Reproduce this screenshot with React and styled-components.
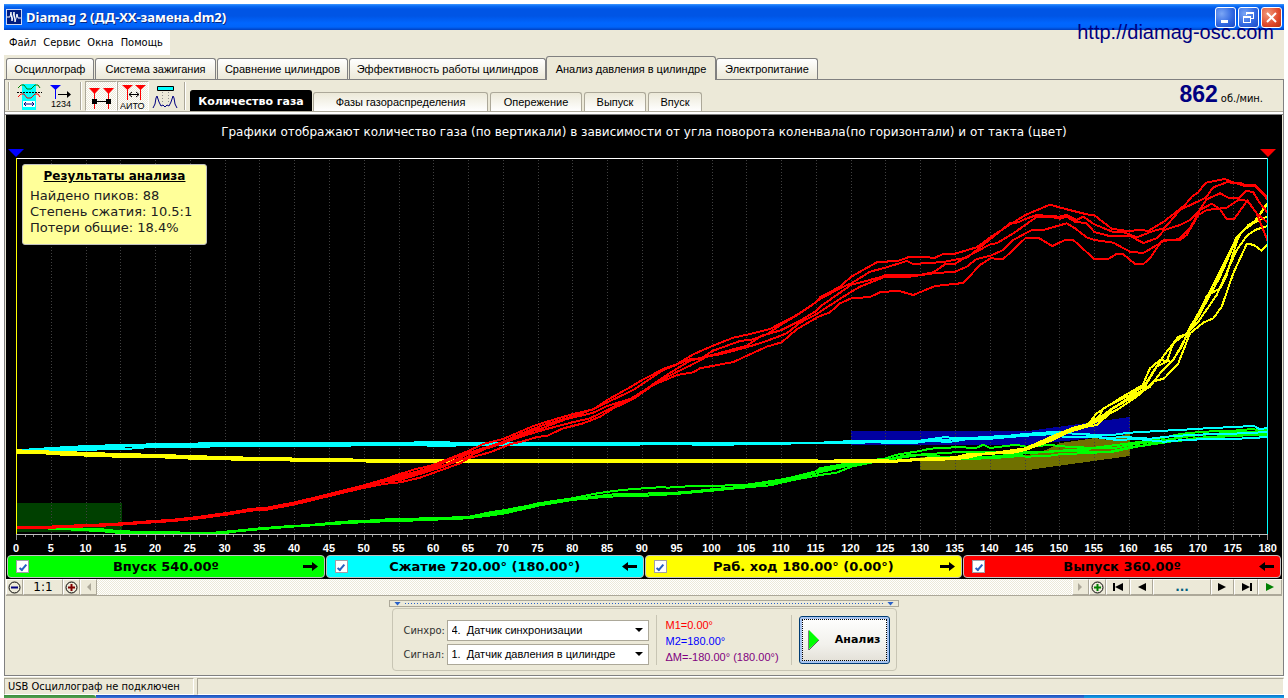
import React from "react";
import styled, { createGlobalStyle, css } from "styled-components";

const face = "#ece9d8";
const ui = '"Liberation Sans", Arial, sans-serif';
const tahoma = '"DejaVu Sans Condensed", "DejaVu Sans", sans-serif';
const verdana = '"DejaVu Sans", Verdana, sans-serif';

const GlobalStyle = createGlobalStyle`
  *, *::before, *::after { box-sizing: border-box; }
  body { margin: 0; background: #fff; font-family: ${ui}; font-size: 12px; color: #000; }
  button, select, input { font: inherit; color: inherit; margin: 0; padding: 0; }
`;

const Page = styled.div`
  position: relative;
  padding: 4px 4px 0;
`;

const Window = styled.main`
  background: ${face};
`;

/* ---------- title bar ---------- */

const TitleBar = styled.header`
  display: flex;
  align-items: center;
  gap: 4px;
  height: 26px;
  padding: 0 2px;
  background: linear-gradient(#3f97ff 0, #0a6cf5 2px, #0055e5 5px, #0055e5 12px, #0066ff 19px, #0064fa 23px, #0040c0 26px);
`;

const AppTitle = styled.h1`
  flex: 1;
  margin: 0;
  font: bold 13px/20px "Noto Sans", ${verdana};
  color: #fff;
  text-shadow: 1px 1px 0 #0a2a80;
`;

const WindowButtons = styled.div`
  display: flex;
  gap: 2px;
`;

const WindowButton = styled.button`
  display: grid;
  place-items: center;
  width: 21px;
  height: 21px;
  border: 1px solid #fff;
  border-radius: 3px;
  background: ${(p) =>
    p.$close
      ? "radial-gradient(circle at 30% 30%, #f09a7c, #e0482a 60%, #b8300c)"
      : "radial-gradient(circle at 30% 30%, #7ba6f5, #2f66e0 60%, #1c49c4)"};
`;

const SiteLink = styled.a`
  position: absolute;
  top: 20px;
  right: 14px;
  font: 20px/24px ${ui};
  color: #000080;
  text-decoration: none;
`;

/* ---------- menu and tabs ---------- */

const MenuBar = styled.nav`
  display: flex;
  gap: 7px;
  width: 166px;
  height: 25px;
  padding: 0 5px;
  background: #fff;
`;

const MenuItem = styled.button`
  border: 0;
  background: none;
  font: 11px/24px ${tahoma};
`;

const TabRow = styled.div`
  display: flex;
  align-items: flex-end;
  gap: 1px;
  height: 25px;
  padding-left: 2px;
  border-bottom: 1px solid #808080;
`;

const Tab = styled.button`
  width: ${(p) => p.$width}px;
  height: 21px;
  border: 1px solid #808080;
  border-bottom: 0;
  border-radius: 3px 3px 0 0;
  background: linear-gradient(#fff, ${face});
  font: 11px/20px ${ui};
  white-space: nowrap;
  ${(p) =>
    p.$active &&
    css`
      height: 24px;
      margin: 0 -1px -1px;
      background: ${face};
    `}
`;

const Client = styled.section`
  border: solid #808080;
  border-width: 0 1px 1px;
`;

const ToolRow = styled.div`
  display: flex;
  align-items: flex-end;
  height: 32px;
  border-bottom: 1px solid #aca899;
`;

const Separator = styled.span`
  width: 2px;
  height: 28px;
  margin: 0 3px 1px;
  border-left: 1px solid #aca899;
  border-right: 1px solid #fff;
`;

const Tool = styled.button`
  display: grid;
  place-items: center;
  width: 32px;
  height: 30px;
  border: 1px solid transparent;
  background: none;
  ${(p) =>
    p.$pressed &&
    css`
      border-color: #aca899 #fff #fff #aca899;
      background: repeating-conic-gradient(#fff 0 25%, ${face} 0 50%) 0 0 / 2px 2px;
    `}
`;

const SubTabs = styled.div`
  display: flex;
  flex: 1;
  align-items: flex-end;
  gap: 2px;
  padding-left: 1px;
`;

const SubTab = styled.button`
  width: ${(p) => p.$width}px;
  height: 19px;
  border: 1px solid #aca899;
  border-bottom: 0;
  border-radius: 3px 3px 0 0;
  background: linear-gradient(${face}, #fff);
  font: 11px/18px ${ui};
  white-space: nowrap;
  ${(p) =>
    p.$active &&
    css`
      height: 21px;
      margin-right: -1px;
      border-color: #000;
      background: #000;
      color: #fff;
      font: bold 11px/19px ${verdana};
    `}
`;

const Rpm = styled.div`
  display: flex;
  align-items: baseline;
  gap: 3px;
  padding-right: 20px;
  font: 11px/24px ${tahoma};
  strong {
    font: bold 23px/24px ${ui};
    color: #000080;
  }
`;

const ClientEdge = styled.div`
  height: 3px;
  background: #fff;
  border-bottom: 1px solid #808080;
`;

/* ---------- chart ---------- */

const ChartArea = styled.div`
  position: relative;
  margin: 0 1px;
  background: #000;
  color: #fff;
`;

const ChartTitle = styled.h2`
  margin: 0;
  height: 34px;
  font: 12px/34px ${verdana};
  text-align: center;
`;

const Plot = styled.div`
  padding: 0 14px 0 10px;
`;

const Markers = styled.div`
  display: flex;
  justify-content: space-between;
  height: 9px;
  margin: 0 -8px;
`;

const Triangle = styled.span`
  width: 16px;
  height: 8px;
  background: ${(p) => p.color};
  clip-path: polygon(0 0, 100% 0, 50% 100%);
`;

const PlotSvg = styled.svg`
  display: block;
  width: 100%;
  height: 384px;
`;

const AxisLabels = styled.div`
  display: flex;
  justify-content: space-between;
  height: 13px;
  font: bold 11px/12px ${ui};
  span {
    display: flex;
    justify-content: center;
    width: 0;
  }
`;

const Results = styled.aside`
  position: absolute;
  top: 49px;
  left: 16px;
  width: 185px;
  height: 81px;
  padding: 3px 7px;
  border: 1px solid #c0c0c0;
  border-radius: 3px;
  background: #ffff99;
  color: #202020;
  font: 13px/16px ${verdana};
  h3 {
    margin: 0 0 4px;
    font: bold 12px/16px ${verdana};
    color: #000;
    text-align: center;
    text-decoration: underline;
  }
  p {
    margin: 0;
    white-space: nowrap;
  }
`;

const Channels = styled.div`
  display: grid;
  grid-template-columns: repeat(4, 1fr);
  gap: 1px;
  padding: 0 1px 1px;
`;

const Channel = styled.label`
  display: flex;
  align-items: center;
  height: 23px;
  padding: 0 6px 0 8px;
  border: 1px solid #c0c0c0;
  border-radius: 4px;
  background: ${(p) => p.$bg};
  color: #000;
  font: bold 13px/20px ${verdana};
  > span {
    flex: 1;
    text-align: center;
  }
`;

const Check = styled.input`
  display: grid;
  place-items: center;
  appearance: none;
  width: 13px;
  height: 13px;
  border: 1px solid #a0a0a8;
  background: #fff;
  &:checked::after {
    content: "";
    width: 4px;
    height: 8px;
    border: solid #2860c0;
    border-width: 0 2px 2px 0;
    transform: rotate(40deg);
  }
`;

/* ---------- scroll row ---------- */

const ScrollRow = styled.div`
  display: flex;
  height: 17px;
  margin: 0 1px;
  border-bottom: 1px solid #aca899;
`;

const Track = styled.div`
  flex: 1;
  background: repeating-conic-gradient(#fff 0 25%, ${face} 0 50%) 0 0 / 2px 2px;
`;

const Small = styled.button`
  display: grid;
  place-items: center;
  width: ${(p) => p.$width || 17}px;
  height: 16px;
  border: 1px solid;
  border-color: #fff #aca899 #aca899 #fff;
  background: ${face};
  color: ${(p) => p.color || "#000"};
  font: ${(p) => (p.$bold ? "bold" : "normal")} 12px/14px ${verdana};
`;

/* ---------- control panel ---------- */

const ControlPanel = styled.div`
  display: flex;
  flex-direction: column;
  align-items: center;
  padding: 4px 0;
`;

const Splitter = styled.div`
  display: flex;
  align-items: center;
  justify-content: space-between;
  width: 510px;
  height: 7px;
  padding: 0 4px;
  border: 1px solid #aca899;
  &::before, &::after {
    content: "";
    width: 7px;
    height: 4px;
    background: #2860c8;
    clip-path: polygon(0 0, 100% 0, 50% 100%);
  }
  i {
    flex: 1;
    height: 1px;
    margin: 0 4px;
    background: repeating-linear-gradient(90deg, #2860c8 0 1px, transparent 1px 3px);
  }
`;

const Group = styled.form`
  display: flex;
  align-items: center;
  width: 505px;
  height: 63px;
  margin: 1px 0 0;
  padding: 0 6px 0 11px;
  border: 1px solid #c8c5b4;
  border-radius: 4px;
`;

const Fields = styled.div`
  display: grid;
  grid-template-columns: 43px 202px;
  row-gap: 3px;
  align-items: center;
  padding-top: 6px;
  label {
    font: 11px/21px ${tahoma};
    color: #303030;
  }
`;

const SelectBox = styled.div`
  position: relative;
  svg {
    position: absolute;
    top: 8px;
    right: 6px;
    pointer-events: none;
  }
`;

const Select = styled.select`
  display: block;
  appearance: none;
  width: 100%;
  height: 21px;
  padding: 0 4px;
  border: 1px solid #aca899;
  border-radius: 0;
  background: #fff;
  font: 11px/19px ${ui};
  white-space: pre;
`;

const Readings = styled.div`
  width: 137px;
  height: 50px;
  margin: 0 7px;
  padding: 2px 0 0 9px;
  border: solid #c8c5b4;
  border-width: 0 1px;
  font: 11px/16px ${ui};
  p {
    margin: 0;
    white-space: nowrap;
  }
`;

const Reading = styled.p`
  color: ${(p) => p.color};
`;

const AnalyseButton = styled.button`
  display: flex;
  align-items: center;
  gap: 16px;
  width: 91px;
  height: 48px;
  padding: 0 8px;
  border: 1px solid #003c74;
  border-radius: 3px;
  background: linear-gradient(#fff, #f2f1ec 60%, #e2dfd6);
  box-shadow: inset 0 0 0 2px #a8c4f0;
  outline: 1px dotted #000;
  outline-offset: -4px;
  font: bold 11px/20px ${verdana};
  svg {
    flex: none;
  }
`;

/* ---------- status and task bar ---------- */

const StatusBar = styled.footer`
  display: flex;
  gap: 3px;
  padding: 1px 0 0;
  border-top: 1px solid #fff;
`;

const StatusCell = styled.div`
  width: ${(p) => (p.$wide ? "auto" : "190px")};
  flex: ${(p) => (p.$wide ? 1 : "none")};
  height: 17px;
  padding-left: 3px;
  border: 1px solid;
  border-color: #aca899 #fff #fff #aca899;
  font: 11px/15px ${tahoma};
`;

const Taskbar = styled.div`
  display: grid;
  grid-template-columns: 92px 1fr 200px;
  height: 4px;
  i:nth-child(1) { background: linear-gradient(#3c8c3c, #58a858); border-radius: 0 3px 0 0; }
  i:nth-child(2) { background: linear-gradient(#1c4cb8, #4088e8); }
  i:nth-child(3) { background: linear-gradient(#0c70c8, #18b8f8); }
`;

/* ---------- plot data ----------
   A trace is a list of sections. Each section has the corner it is measured
   from and its points, in thirds of a plot unit from that corner. */

const corners = { a: [0, 430], b: [400, 300], c: [820, 400], d: [820, 160] };

const toPoints = (sections) =>
  sections
    .map(([corner, pts]) => {
      const [ox, oy] = corners[corner];
      return pts
        .split(" ")
        .map((pair) => {
          const [x, y] = pair.split(",").map(Number);
          return `${(ox + x / 3).toFixed(1)},${(oy + y / 3).toFixed(1)}`;
        })
        .join(" ");
    })
    .join(" ");

const redTop = "50,292 115,292 180,288 265,285 330,282 380,279 430,275 520,269 600,260 700,246 750,237 800,233 885,217 935,205 1010,186 1080,169 1150,149";
const redLow = "50,295 115,295 180,292 265,289 330,286 380,283 430,279 520,273 600,265 700,251 750,242 800,239 885,223 935,211 1010,193 1080,176 1150,162";
const redMid = "50,294 115,294 180,290 265,287 330,284 380,281 430,277 520,271 600,262 700,248 750,239 800,236 885,220 935,208 1010,189 1080,172 1150,155";

const red = [
  [["a", redTop], ["b", "0,522 45,508 100,495 150,475 205,453 250,432 310,417 360,395 400,378 450,362 517,343 580,328 622,300 690,262 727,240 790,207 832,192 880,163 937,138 1000,113 1060,100 1110,87 1145,68 1190,45 1250,5"], ["d", "0,412 60,380 94,350 170,307 235,302 270,290 345,293 370,282 405,281 470,262 511,232 560,200 616,165 690,134 745,149 800,163 823,166 875,206 920,213 965,210 985,213 1033,184 1095,135 1115,110 1135,97 1157,68 1215,57 1240,67 1270,77 1305,74 1345,115"]],
  [["a", redTop], ["b", "0,528 60,512 110,497 170,470 250,445 310,425 360,402 430,375 517,350 585,325 622,307 700,270 727,252 790,210 832,193 870,177 905,175 937,153 1020,123 1060,118 1100,103 1145,73 1200,40 1250,5"], ["d", "0,417 60,385 94,370 150,335 196,323 260,303 280,312 370,306 405,299 440,293 470,270 511,237 570,190 595,187 616,177 650,165 718,170 740,165 770,180 790,170 823,193 880,216 910,216 950,232 1000,213 1033,205 1080,150 1157,113 1180,82 1220,67 1265,70 1280,78 1305,78 1345,120"]],
  [["a", redMid], ["b", "0,533 60,518 130,497 205,462 310,430 360,405 430,383 500,357 580,338 622,318 690,297 727,275 790,232 832,205 870,182 937,165 1040,137 1085,107 1145,90 1200,62 1250,32"], ["d", "0,440 50,405 94,374 130,365 180,352 196,345 300,345 340,337 375,313 405,311 450,285 511,253 530,250 580,220 616,195 650,170 700,172 720,176 740,170 765,185 800,190 823,216 865,227 930,228 970,249 1010,235 1033,210 1080,195 1110,180 1135,155 1160,118 1200,100 1225,113 1255,115 1280,92 1300,97 1320,130 1345,160"]],
  [["a", redMid], ["b", "0,540 60,522 130,500 205,470 260,445 310,428 370,408 440,387 517,367 570,355 622,330 700,292 770,247 832,215 870,197 920,170 960,163 1040,142 1100,123 1160,100 1200,68 1250,42"], ["d", "0,455 94,395 120,380 150,368 196,350 270,350 340,340 405,335 440,320 470,297 511,287 550,270 580,240 635,210 670,210 740,190 765,205 800,232 823,240 880,248 930,275 970,279 1020,250 1033,240 1080,240 1100,225 1135,165 1160,150 1220,143 1255,120 1283,122 1310,160 1345,190"]],
  [["a", redLow], ["b", "0,547 60,533 110,515 180,490 205,475 270,457 330,433 375,422 415,410 440,408 490,385 550,370 600,350 640,325 700,297 760,255 832,225 880,217 900,205 1000,186 1100,140 1145,127 1190,88 1250,53"], ["d", "0,468 30,457 60,430 94,415 150,411 180,397 235,392 280,405 345,378 430,369 480,315 511,295 550,297 616,235 655,233 697,258 735,240 760,240 823,297 865,297 890,281 910,283 945,312 970,312 990,295 1025,243 1075,238 1110,205 1140,150 1175,131 1200,148 1220,177 1243,176 1282,122 1310,160 1345,247"]],
];

const cyanTop = [["a", "50,62 95,58 155,54 220,50 330,46 405,44 530,42 660,39 840,38 1160,38"], ["b", "0,429 60,427 500,430 800,428 1050,428 1250,428"]];
const cyanMid = [["a", "50,62 95,60 155,58 220,55 330,52 405,48 530,46 660,43 840,41 1160,41"], ["b", "0,432 500,432 800,431 1050,430 1250,429"]];
const cyanLow = [["a", "50,63 220,60 320,58 345,56 390,56 440,52 590,50 800,47 1000,47 1050,48 1060,44 1160,44"], ["b", "0,434 100,437 165,437 170,434 600,434 850,433 940,435 1100,431 1250,430"]];
const cyan = [
  [...cyanTop, ["c", "0,128 100,123 300,122 370,112 405,113 511,113 616,102 710,95 770,102 870,106 928,98 1033,92 1130,87 1180,83 1240,82 1300,77 1320,88 1345,83"]],
  [...cyanMid, ["c", "0,128 110,128 160,124 280,127 330,120 385,119 440,115 511,110 616,105 718,99 790,102 850,113 928,112 990,116 1060,108 1160,103 1240,101 1345,96"]],
  [...cyanLow, ["c", "0,128 110,128 160,127 280,130 330,122 385,126 440,118 511,116 616,107 690,103 730,110 820,110 890,120 950,117 1033,125 1080,121 1180,116 1240,117 1345,111"]],
];

const yellowTop = [["a", "50,61 130,64 215,67 330,71 400,73 510,76 640,80 780,84 1030,88 1180,91"], ["b", "0,481 1250,481"]];
const yellowLow = [["a", "50,70 130,70 200,75 300,78 370,81 480,82 600,87 780,90 1010,94 1180,95"], ["b", "0,485 300,485 320,487 500,485 920,487 1250,485"]];
const yellowMid = [["a", "50,66 130,67 215,71 330,75 400,77 510,80 640,84 780,87 1030,91 1180,93"], ["b", "0,483 1250,483"]];
const yellow = [
  [...yellowTop, ["c", "0,182 160,180 225,182 300,176 405,172 440,163 511,160 560,153 616,145 660,125 718,100 760,83 805,72 830,40"], ["d", "845,750 900,715 968,675 990,625 1020,600 1055,605 1085,560 1110,500 1140,455 1160,408 1200,385 1220,345 1250,245 1265,215 1300,190 1345,125"]],
  [...yellowTop, ["c", "0,182 160,181 225,184 300,178 405,174 450,166 511,161 560,156 616,147 670,122 718,104 760,85 805,76 840,45"], ["d", "850,745 930,705 970,680 1033,585 1075,530 1100,522 1135,470 1200,350 1250,235 1285,195 1310,180 1345,127"]],
  [...yellowMid, ["c", "0,184 225,184 300,179 405,175 470,165 530,160 616,148 680,125 730,103 800,77 830,60"], ["d", "870,750 928,712 968,690 1010,620 1040,605 1060,550 1100,520 1135,460 1190,355 1250,232 1280,200 1345,168"]],
  [...yellowLow, ["c", "0,185 225,185 300,180 405,178 450,172 490,162 580,158 616,148 700,118 740,98 800,80 840,60"], ["d", "880,745 950,705 990,680 1020,640 1060,600 1110,510 1135,485 1190,405 1250,270 1280,228 1305,210 1345,197"]],
  [...yellowLow, ["c", "0,185 225,185 300,180 405,178 450,172 490,162 580,158 616,150 700,120 740,98 800,80 830,75 870,40"], ["d", "890,750 950,710 1000,665 1033,655 1075,610 1110,520 1150,488 1180,475 1205,440 1240,340 1280,252 1300,254 1325,272 1345,252"]],
];

const greenTop = [["a", "50,290 115,292 150,296 230,296 300,297 330,301 400,305 450,309 640,308 700,303 780,295 860,289 930,285 1030,275 1100,272 1180,267"], ["b", "0,657 80,655 205,651 270,637 310,631 380,618 415,610 517,595 580,582 640,573 700,567 790,561 800,563 880,558 960,557 1040,554 1130,541 1180,531 1250,513"]];
const greenLow = [["a", "50,292 130,294 240,300 310,304 360,309 670,310 720,303 860,291 1000,282 1100,276 1180,273"], ["b", "0,663 205,655 310,641 415,617 517,600 620,590 770,586 850,580 937,572 1040,562 1110,556 1180,540 1250,527"]];
const greenMid = [["a", "50,291 130,293 240,298 310,302 400,307 670,308 720,303 860,290 1000,280 1180,270"], ["b", "0,660 205,653 310,636 415,613 517,598 640,583 770,580 850,577 937,568 1040,559 1130,546 1250,520"]];
const green = [
  [...greenTop, ["c", "0,205 94,188 200,175 225,165 300,153 330,146 405,142 470,143 490,134 511,144 590,134 616,140 690,135 760,142 823,143 928,130 1000,120 1080,102 1150,95 1240,92 1300,87 1320,92 1345,90"]],
  [...greenMid, ["c", "0,211 60,200 120,190 200,180 250,167 405,157 500,157 616,155 680,155 750,150 823,145 880,145 928,135 1033,120 1130,106 1240,97 1345,95"]],
  [...greenMid, ["c", "0,217 94,195 170,185 230,175 300,165 405,173 511,170 616,160 740,152 870,157 950,140 1050,125 1130,114 1240,106 1345,101"]],
  [...greenLow, ["c", "0,225 50,218 94,200 160,187 250,180 380,178 511,175 600,168 620,170 690,167 718,163 823,158 870,155 928,142 980,135 1033,120 1080,122 1240,107 1345,105"]],
];

const traces = [
  ["#00ff00", green],
  ["#00ffff", cyan],
  ["#ffff00", yellow],
  ["#ff0000", red],
];

const plotX = (deg) => 16 + Math.round((deg * 1252) / 180);
const majors = Array.from({ length: 37 }, (_, i) => i * 5);
const minors = Array.from({ length: 145 }, (_, i) => i * 1.25);

function PlotGraph() {
  return (
    <PlotSvg viewBox="16 158 1252 384" preserveAspectRatio="none" shapeRendering="crispEdges" role="img" aria-label="Количество газа">
      <rect x="16" y="503" width="106" height="29" fill="#004000" />
      <polygon points="851,431 1028,431 1130,417 1130,434 1028,445 851,445" fill="#0000a0" />
      <polygon points="920,457 1028,455 1046,450 1060,443 1095,438 1108,440 1130,433 1130,456 1028,470 920,470" fill="#707000" />
      {majors.slice(1, -1).map((d) => (
        <line key={d} x1={plotX(d) + 0.5} x2={plotX(d) + 0.5} y1="160" y2="534" stroke="#404040" strokeDasharray="1 2" />
      ))}
      {traces.map(([color, list]) => (
        <g key={color} fill="none" stroke={color} strokeWidth="2">
          {list.map((t, i) => (
            <polyline key={i} points={toPoints(t)} />
          ))}
        </g>
      ))}
      <path d="M16 158.5H1268" stroke="#fff" />
      <path d="M16.5 158V534" stroke="#ffff00" />
      <path d="M1267.5 158V534" stroke="#00ffff" />
      <path d="M16 534.5H1268" stroke="#c0c0c0" />
      {minors.map((d) => (
        <line key={d} x1={Math.min(plotX(d), 1267) + 0.5} x2={Math.min(plotX(d), 1267) + 0.5} y1="535" y2={d % 5 ? 537 : 540} stroke="#909090" />
      ))}
    </PlotSvg>
  );
}

/* ---------- icons ---------- */

const LogoIcon = () => (
  <svg width="16" height="16" viewBox="0 0 16 16">
    <rect width="16" height="16" fill="#d0d8f0" />
    <rect x="1" y="1" width="14" height="14" fill="#001c80" />
    <path d="M1 8h3l1-5 1 9 2-9 1 10 2-8 1 4h3" fill="none" stroke="#fff" />
  </svg>
);

const MinimizeIcon = () => (
  <svg width="13" height="13"><rect x="2" y="9" width="7" height="3" fill="#fff" /></svg>
);
const RestoreIcon = () => (
  <svg width="13" height="13" fill="none" stroke="#fff" shapeRendering="crispEdges">
    <path d="M4.5 4V1.5h7v6H9M4 2.5h8" />
    <path d="M1.5 5.5h7v6h-7zM1 6.5h8" />
  </svg>
);
const CloseIcon = () => (
  <svg width="13" height="13" stroke="#fff" strokeWidth="2"><path d="M2 2l9 9M11 2l-9 9" /></svg>
);

const PeaksIcon = () => (
  <svg width="25" height="27" viewBox="0 0 25 27" fill="none">
    <path d="M5 1h14v26H5z" fill="#00ffff" />
    <path d="M0 9.500h25" stroke="#000" strokeDasharray="2 1" />
    <path d="M1 5l3-3h3l3 4h4l4-4h3l2 3" stroke="#008000" />
    <path d="M1 14l3-3h3l3 4h4l4-4h3l2 3" stroke="#ff0000" />
    <path d="M6 18h12v6H6z" fill="#fff" />
    <path d="M7 21h10M9 19l-2 2 2 2M15 19l2 2-2 2" stroke="#000080" />
  </svg>
);
const NumberIcon = () => (
  <svg width="25" height="27" viewBox="0 0 25 27" fill="none">
    <path d="M1 2h11l-5.500 5z" fill="#0000ff" />
    <path d="M6.500 6v10" stroke="#0000ff" />
    <path d="M9 11.500h12" stroke="#000" />
    <path d="M18 8l4 3.500-4 3.500z" fill="#000" />
    <text x="2" y="24" fontSize="9" fontFamily="Liberation Sans, sans-serif" fill="#000">1234</text>
  </svg>
);
const MarkersIcon = () => (
  <svg width="27" height="27" viewBox="0 0 27 27" fill="none">
    <path d="M1 5h11l-5.500 6zM15 5h11l-5.500 6z" fill="#ff0000" />
    <path d="M6.500 8v18M20.500 8v18" stroke="#ff0000" />
    <path d="M4 16h5v5H4zM18 16h5v5h-5z" fill="#000" />
    <path d="M8 18.500h11" stroke="#000" />
  </svg>
);
const AutoIcon = () => (
  <svg width="27" height="27" viewBox="0 0 27 27" fill="none">
    <path d="M2 2h11L7.500 7zM15 2h11l-5.500 5z" fill="#ff0000" />
    <path d="M7.500 5v12M20.500 5v12" stroke="#ff0000" />
    <path d="M9 11.500h10M12 9l-3 2.500 3 2.500M16 9l3 2.500-3 2.500" stroke="#000" />
    <text x="0" y="26" fontSize="9" fontFamily="Liberation Sans, sans-serif" fill="#000">АИТО</text>
  </svg>
);
const WaveIcon = () => (
  <svg width="27" height="27" viewBox="0 0 27 27" fill="none">
    <path d="M5.500 3.500h16v4h-16z" fill="#00ffff" stroke="#000" />
    <path d="M10.500 9v12M16.500 9v12" stroke="#909090" strokeDasharray="1 2" />
    <path d="M1 25l2-4 1-6 1-2 2 6 2 4 2-1 2 2 2-2 2 1 2-4 2-6 1 2 1 6 2 4" stroke="#000080" />
  </svg>
);
const ArrowIcon = ({ left }) => (
  <svg width="15" height="9" viewBox="0 0 15 9">
    <path d={left ? "M0 4.500L6 0v3h9v3H6v3z" : "M15 4.500L9 0v3H0v3h9v3z"} fill="#000" />
  </svg>
);
const ZoomIcon = ({ color, plus }) => (
  <svg width="13" height="13" viewBox="0 0 13 13" fill="none">
    <circle cx="6.500" cy="6.500" r="5.500" stroke="#000" />
    <path d={plus ? "M3 6.500h7M6.500 3v7" : "M3 6.500h7"} stroke={color} strokeWidth="2" />
  </svg>
);
const StepIcon = ({ left, bar }) => (
  <svg width="11" height="8" viewBox="0 0 11 8" fill="currentColor">
    <path d={left ? "M10 0v8L2 4z" : "M1 0v8l8-4z"} />
    {bar && <rect x={left ? 0 : 9} width="2" height="8" />}
  </svg>
);
const ScrollIcon = ({ left }) => (
  <svg width="5" height="8" viewBox="0 0 5 8" fill="#aca899">
    <path d={left ? "M5 0v8L1 4z" : "M0 0v8l4-4z"} />
  </svg>
);
const DropIcon = () => (
  <svg width="8" height="5" viewBox="0 0 8 5"><path d="M0 0h8L4 4z" fill="#000" /></svg>
);
const PlayIcon = () => (
  <svg width="11" height="20" viewBox="0 0 11 20">
    <path d="M0 1l1-1v20H0z" fill="#808080" />
    <path d="M1 0l10 10-10 9z" fill="#00ff00" />
    <path d="M11 10L1 20" stroke="#606060" />
  </svg>
);

/* ---------- content ---------- */

const tabs = [
  ["Осциллограф", 88],
  ["Система зажигания", 121],
  ["Сравнение цилиндров", 131],
  ["Эффективность работы цилиндров", 197],
  ["Анализ давления в цилиндре", 170],
  ["Электропитание", 102],
];
const subTabs = [
  ["Количество газа", 122],
  ["Фазы газораспределения", 175],
  ["Опережение", 92],
  ["Выпуск", 62],
  ["Впуск", 54],
];
const channels = [
  ["#00ff00", "Впуск 540.00º", false],
  ["#00ffff", "Сжатие 720.00° (180.00°)", true],
  ["#ffff00", "Раб. ход 180.00° (0.00°)", false],
  ["#ff0000", "Выпуск 360.00º", true],
];

export default function App() {
  return (
    <Page>
      <GlobalStyle />
      <Window>
        <TitleBar>
          <LogoIcon />
          <AppTitle>Diamag 2 (ДД-ХХ-замена.dm2)</AppTitle>
          <WindowButtons>
            <WindowButton aria-label="Свернуть"><MinimizeIcon /></WindowButton>
            <WindowButton aria-label="Восстановить"><RestoreIcon /></WindowButton>
            <WindowButton aria-label="Закрыть" $close><CloseIcon /></WindowButton>
          </WindowButtons>
        </TitleBar>
        <MenuBar>
          {["Файл", "Сервис", "Окна", "Помощь"].map((m) => (
            <MenuItem key={m}>{m}</MenuItem>
          ))}
        </MenuBar>
        <TabRow>
          {tabs.map(([name, width], i) => (
            <Tab key={name} $width={width} $active={i === 4}>{name}</Tab>
          ))}
        </TabRow>
        <Client>
          <ToolRow>
            <Separator />
            <Tool aria-label="Пики"><PeaksIcon /></Tool>
            <Tool aria-label="Нумерация"><NumberIcon /></Tool>
            <Separator />
            <Tool aria-label="Маркеры" $pressed><MarkersIcon /></Tool>
            <Tool aria-label="Авто" $pressed><AutoIcon /></Tool>
            <Tool aria-label="Сигнал"><WaveIcon /></Tool>
            <Separator />
            <SubTabs>
              {subTabs.map(([name, width], i) => (
                <SubTab key={name} $width={width} $active={i === 0}>{name}</SubTab>
              ))}
            </SubTabs>
            <Rpm><strong>862</strong>об./мин.</Rpm>
          </ToolRow>
          <ClientEdge />
          <ChartArea>
            <ChartTitle>
              Графики отображают количество газа (по вертикали) в зависимости от угла поворота коленвала(по горизонтали) и от такта (цвет)
            </ChartTitle>
            <Plot>
              <Markers>
                <Triangle color="#0000ff" />
                <Triangle color="#ff0000" />
              </Markers>
              <PlotGraph />
              <AxisLabels>
                {majors.map((d) => (
                  <span key={d}>{d}</span>
                ))}
              </AxisLabels>
            </Plot>
            <Results>
              <h3>Результаты анализа</h3>
              <p>Найдено пиков: 88</p>
              <p>Степень сжатия: 10.5:1</p>
              <p>Потери общие: 18.4%</p>
            </Results>
            <Channels>
              {channels.map(([bg, name, left]) => (
                <Channel key={name} $bg={bg}>
                  <Check type="checkbox" defaultChecked />
                  <span>{name}</span>
                  <ArrowIcon left={left} />
                </Channel>
              ))}
            </Channels>
          </ChartArea>
          <ScrollRow>
            <Small aria-label="Уменьшить"><ZoomIcon color="#000080" /></Small>
            <Small $width={40}>1:1</Small>
            <Small aria-label="Увеличить"><ZoomIcon color="#800000" plus /></Small>
            <Small aria-label="Влево"><ScrollIcon left /></Small>
            <Track />
            <Small aria-label="Вправо"><ScrollIcon /></Small>
            <Small aria-label="Добавить"><ZoomIcon color="#008000" plus /></Small>
            <Small $width={24} aria-label="В начало"><StepIcon left bar /></Small>
            <Small $width={23} aria-label="Назад"><StepIcon left /></Small>
            <Small $width={58} $bold color="#006080">...</Small>
            <Small $width={23} aria-label="Вперёд"><StepIcon /></Small>
            <Small $width={24} aria-label="В конец"><StepIcon bar /></Small>
            <Small $width={24} color="#008000" aria-label="Пуск"><StepIcon /></Small>
          </ScrollRow>
          <ControlPanel>
            <Splitter><i /></Splitter>
            <Group onSubmit={(e) => e.preventDefault()}>
              <Fields>
                <label htmlFor="sync">Синхро:</label>
                <SelectBox>
                  <Select id="sync"><option>4.{"\u00a0\u00a0"}Датчик синхронизации</option></Select>
                  <DropIcon />
                </SelectBox>
                <label htmlFor="signal">Сигнал:</label>
                <SelectBox>
                  <Select id="signal"><option>1.{"\u00a0\u00a0"}Датчик давления в цилиндре</option></Select>
                  <DropIcon />
                </SelectBox>
              </Fields>
              <Readings>
                <Reading color="#ff0000">M1=0.00°</Reading>
                <Reading color="#0000ff">M2=180.00°</Reading>
                <Reading color="#800080">ΔM=-180.00° (180.00°)</Reading>
              </Readings>
              <AnalyseButton><PlayIcon />Анализ</AnalyseButton>
            </Group>
          </ControlPanel>
        </Client>
        <StatusBar>
          <StatusCell>USB Осциллограф не подключен</StatusCell>
          <StatusCell $wide />
        </StatusBar>
        <Taskbar><i /><i /><i /></Taskbar>
      </Window>
      <SiteLink href="http://diamag-osc.com">http://diamag-osc.com</SiteLink>
    </Page>
  );
}
